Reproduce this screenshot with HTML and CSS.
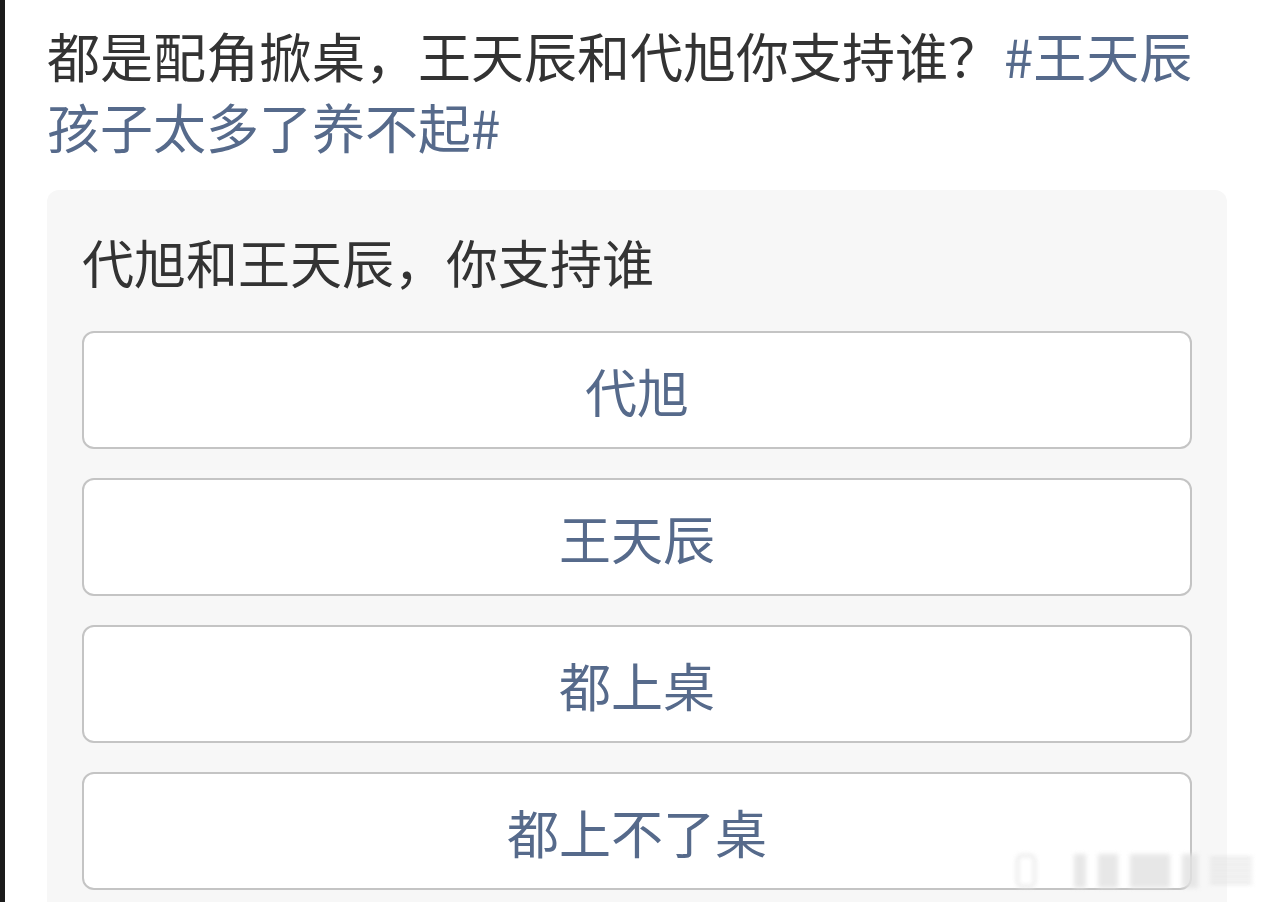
FILE: index.html
```html
<!DOCTYPE html>
<html lang="zh-CN">
<head>
  <meta charset="UTF-8" />
  <meta name="viewport" content="width=device-width, initial-scale=1.0"/>
  <title>投票</title>
  <link rel="stylesheet" href="styles.css">
</head>
<body>

  <div class="post">
    <p class="post-text">都是配角掀桌，王天辰和代旭你支持谁？ <span class="topic">#王天辰</span><span class="topic">孩子太多了养不起#</span></p>

    <div class="poll">
      <div class="poll-title">代旭和王天辰，你支持谁</div>
      <div class="poll-options">
        <div class="option">代旭</div>
        <div class="option">王天辰</div>
        <div class="option">都上桌</div>
        <div class="option">都上不了桌</div>
      </div>
    </div>
  </div>

  <div class="watermark">
    <span class="wm-bar wm-a"></span>
    <span class="wm-bar wm-b"></span>
    <span class="wm-bar wm-c"></span>
    <span class="wm-bar wm-d"></span>
    <span class="wm-bar wm-e"></span>
    <span class="wm-bar wm-f"></span>
  </div>

</body>
</html>
```

FILE: styles.css
```css
:root {
  --text: #333333;
  --link: #566a8b;
  --panel-bg: #f7f7f7;
  --option-border: #c4c4c4;
}

* {
  margin: 0;
  padding: 0;
  box-sizing: border-box;
  font-family: "Noto Sans CJK SC", "Noto Sans", sans-serif;
}

body {
  background: #ffffff;
  border-left: 5px solid #1b1b1b;
  height: 100vh;
  overflow: hidden;
  position: relative;
}

.post {
  padding: 20px 32px 0 42px;
}

.post-text {
  font-size: 53px;
  line-height: 71px;
  word-spacing: -9px;
  color: var(--text);
}

.topic {
  color: var(--link);
}

.poll {
  margin-top: 28px;
  margin-right: 5px;
  background: var(--panel-bg);
  border-radius: 12px;
  padding: 36px 35px 40px;
}

.poll-title {
  font-size: 52px;
  line-height: 71px;
  color: var(--text);
  margin-bottom: 34px;
}

.poll-options {
  display: flex;
  flex-direction: column;
  gap: 29px;
}

.option {
  height: 118px;
  display: flex;
  align-items: center;
  justify-content: center;
  background: #ffffff;
  border: 2px solid var(--option-border);
  border-radius: 12px;
  font-size: 52px;
  color: var(--link);
}

.watermark {
  position: absolute;
  right: 12px;
  bottom: 14px;
  display: flex;
  align-items: center;
  gap: 12px;
  filter: blur(2px);
  opacity: 0.8;
}

.wm-bar {
  display: block;
  height: 34px;
  background: #e2e2e2;
}

.wm-a { width: 20px; background: #ffffff; border: 3px solid #e4e4e4; border-radius: 6px; margin-right: 26px; }
.wm-b { width: 12px; }
.wm-c { width: 20px; }
.wm-d { width: 40px; }
.wm-e { width: 16px; }
.wm-f { width: 42px; height: 28px; background: repeating-linear-gradient(#dcdcdc 0 3px, transparent 3px 6px); }
```
